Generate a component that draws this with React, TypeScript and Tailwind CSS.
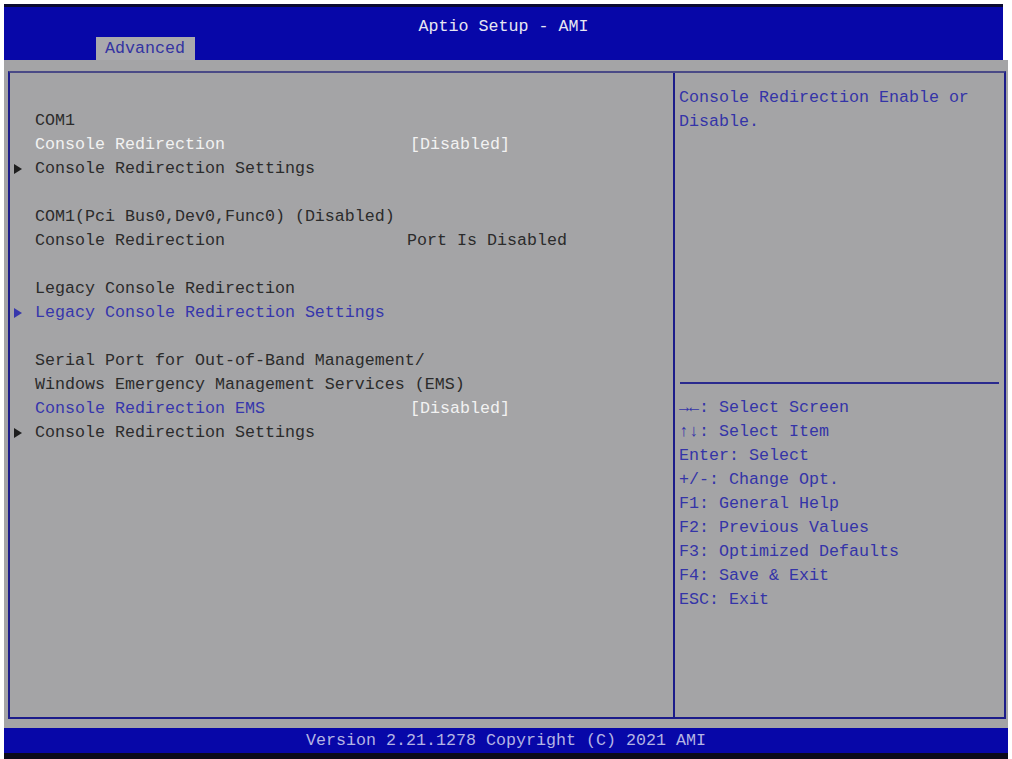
import React from "react";

const mono = { fontFamily: '"Liberation Mono", "DejaVu Sans Mono", monospace' };

function Tri({ color }: { color: string }) {
  return (
    <svg width="10" height="12" viewBox="0 0 10 12" className="absolute left-[-22px] top-[6px]">
      <polygon points="1,1 9,6 1,11" fill={color} />
    </svg>
  );
}

type Row =
  | { kind: "blank" }
  | { kind: "text"; label: string; color: string; value?: string; valueColor?: string; arrow?: string; valueShift?: boolean };

const DARK = "text-[#2b2b2b]";

export default function App() {
  const rows: Row[] = [
    { kind: "text", label: "COM1", color: "text-[#2b2b2b]" },
    { kind: "text", label: "Console Redirection", color: "text-[#f2f2f2]", value: "[Disabled]", valueColor: "text-[#f2f2f2]" },
    { kind: "text", label: "Console Redirection Settings", color: DARK, arrow: "#1e1e1e" },
    { kind: "blank" },
    { kind: "text", label: "COM1(Pci Bus0,Dev0,Func0) (Disabled)", color: DARK },
    { kind: "text", label: "Console Redirection", color: DARK, value: "Port Is Disabled", valueColor: DARK, valueShift: true },
    { kind: "blank" },
    { kind: "text", label: "Legacy Console Redirection", color: DARK },
    { kind: "text", label: "Legacy Console Redirection Settings", color: "text-[#3636ac]", arrow: "#3636ac" },
    { kind: "blank" },
    { kind: "text", label: "Serial Port for Out-of-Band Management/", color: DARK },
    { kind: "text", label: "Windows Emergency Management Services (EMS)", color: DARK },
    { kind: "text", label: "Console Redirection EMS", color: "text-[#3636ac]", value: "[Disabled]", valueColor: "text-[#f2f2f2]" },
    { kind: "text", label: "Console Redirection Settings", color: DARK, arrow: "#1e1e1e" },
  ];

  const help = [
    "→←: Select Screen",
    "↑↓: Select Item",
    "Enter: Select",
    "+/-: Change Opt.",
    "F1: General Help",
    "F2: Previous Values",
    "F3: Optimized Defaults",
    "F4: Save & Exit",
    "ESC: Exit",
  ];

  return (
    <div className="w-[1012px] h-[759px] bg-white pt-[4px] pl-[4px] pr-[4px] flex flex-col text-[16.67px] leading-[24px]" style={mono}>
      {/* header */}
      <div className="h-[3px] bg-[#0a0a30] w-[999px]" />
      <div className="relative h-[53px] w-[999px] bg-[#0707a8] flex justify-center">
        <div className="pt-[8px] text-[#e6e6f2]">Aptio Setup - AMI</div>
        <div className="absolute left-[92px] top-[30px] w-[99px] h-[23px] bg-[#a9a9ad] text-[#3434a2] pl-[9px] leading-[23px]">
          Advanced
        </div>
      </div>

      {/* main grey */}
      <div className="h-[668px] w-[1004px] bg-[#a4a4a6] pt-[11px] pl-[4px] pr-[2px] pb-[9px] flex">
        <div className="flex-1 flex border-2 border-[#1c1c8a] border-t-[#4a4a86]">
          {/* left panel */}
          <div className="w-[663px] pt-[36px] pl-[25px]">
            {rows.map((r, i) =>
              r.kind === "blank" ? (
                <div key={i} className="h-[24px]" />
              ) : (
                <div key={i} className="relative flex h-[24px] whitespace-pre">
                  {r.arrow && <Tri color={r.arrow} />}
                  <div className={`w-[375px] shrink-0 ${r.color}`}>{r.label}</div>
                  {r.value && (
                    <div className={`${r.valueColor} ${r.valueShift ? "-ml-[3px]" : ""}`}>{r.value}</div>
                  )}
                </div>
              )
            )}
          </div>
          {/* divider */}
          <div className="w-[2px] bg-[#1c1c8a]" />
          {/* right panel */}
          <div className="flex-1 flex flex-col">
            <div className="h-[309px] pt-[13px] pl-[4px] text-[#3434a8]">
              <div>Console Redirection Enable or</div>
              <div>Disable.</div>
            </div>
            <div className="mx-[5px] h-[2px] bg-[#2a2a8e]" />
            <div className="pt-[12px] pl-[4px] text-[#3434a8] whitespace-pre">
              {help.map((h, i) => (
                <div key={i} className="h-[24px]">{h}</div>
              ))}
            </div>
          </div>
        </div>
      </div>

      {/* footer */}
      <div className="h-[25px] w-[1004px] bg-[#0707a8] flex justify-center text-[#b4b4e4] leading-[25px]">
        Version 2.21.1278 Copyright (C) 2021 AMI
      </div>
      <div className="h-[6px] w-[1004px] bg-[#0a0a1a]" />
    </div>
  );
}
